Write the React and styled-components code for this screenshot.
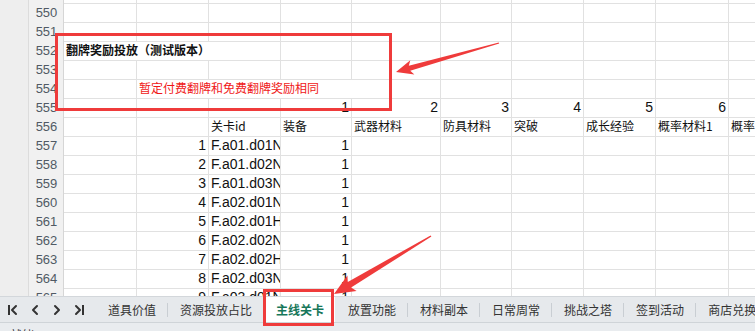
import React from "react";
import styled, { createGlobalStyle } from "styled-components";

const GlobalStyle = createGlobalStyle`
  html, body { margin: 0; padding: 0; background: #fff; overflow: hidden; }
  body { font-family: "Liberation Sans", "Noto Sans CJK SC", sans-serif; }
  * { box-sizing: border-box; }
`;

const RED = "#ef3b3b";
const COLS = "28px 36px 73px 72px 72px 71px 89px 71px 72px 72px 73px 72px";

const Frame = styled.div`
  position: relative;
  width: 755px;
  height: 331px;
  overflow: hidden;
  display: flex;
  flex-direction: column;
`;

const Sheet = styled.div`
  flex: 0 0 296px;
  overflow: hidden;
  background: #fff;
`;

const Rows = styled.div`
  margin-top: -16px;
  width: 801px;
`;

const Row = styled.div`
  display: grid;
  grid-template-columns: ${COLS};
  height: 19px;
`;

const Gutter = styled.div`
  background: #eeeeee;
`;

const RowHead = styled.div`
  background: #f1f1f1;
  border-left: 1px solid #dcdcdc;
  border-right: 1px solid #d6d6d6;
  border-bottom: 1px solid #dcdcdc;
  color: #505a64;
  font-family: "Liberation Sans", sans-serif;
  font-size: 13px;
  line-height: 19px;
  text-align: center;
  padding-left: 1px;
`;

const Cell = styled.div`
  grid-column: span ${(p) => p.$span || 1};
  border-right: 1px solid ${(p) => (p.$span > 1 ? "transparent" : "#e1e1e1")};
  border-bottom: 1px solid #e1e1e1;
  white-space: nowrap;
  overflow: ${(p) => (p.$clip ? "hidden" : "visible")};
  text-align: ${(p) => p.$align || "left"};
  padding: 0 2px 0 2px;
  font-family: ${(p) =>
    p.$cjk
      ? '"Noto Sans CJK SC", sans-serif'
      : '"Liberation Sans", "Noto Sans CJK SC", sans-serif'};
  font-size: ${(p) => (p.$cjk ? "12px" : "14px")};
  line-height: 18px;
  font-weight: ${(p) => (p.$bold ? 700 : 400)};
  color: ${(p) => p.$color || "#111"};
  position: relative;
  z-index: ${(p) => (p.$span > 1 ? 1 : 0)};
`;

const TabBar = styled.div`
  flex: 0 0 26px;
  display: flex;
  align-items: stretch;
  background: #e6e9ec;
  border-top: 1px solid #d3d7db;
`;

const NavGroup = styled.div`
  flex: 0 0 96px;
  display: flex;
  align-items: center;
  padding-left: 2px;
`;

const NavButton = styled.div`
  width: 22px;
  height: 16px;
  display: flex;
  align-items: center;
  justify-content: center;
  color: #333;
`;

const Tab = styled.div`
  flex: 0 0 auto;
  display: flex;
  align-items: center;
  padding: 0 11px 0 12px;
  font-family: "Noto Sans CJK SC", sans-serif;
  font-size: 12px;
  white-space: nowrap;
  color: ${(p) => (p.$active ? "#17775a" : "#333")};
  font-weight: ${(p) => (p.$active ? 700 : 400)};
  background: ${(p) => (p.$active ? "#ffffff" : "transparent")};
`;

const Divider = styled.div`
  flex: 0 0 1px;
  align-self: center;
  height: 14px;
  background: ${(p) => (p.$hidden ? "transparent" : "#c9ced3")};
`;

const StatusBar = styled.div`
  flex: 0 0 22px;
  background: #e9ecef;
  border-top: 1px solid #cfd4d8;
  padding: 3px 0 0 10px;
  font-family: "Noto Sans CJK SC", sans-serif;
  font-size: 12px;
  color: #333;
`;

const Overlay = styled.svg`
  position: absolute;
  left: 0;
  top: 0;
  width: 755px;
  height: 331px;
  pointer-events: none;
  z-index: 5;
`;

const rowsData = [
  { n: 549, cells: [] },
  { n: 550, cells: [] },
  { n: 551, cells: [] },
  {
    n: 552,
    cells: [{ col: 2, span: 2, text: "翻牌奖励投放（测试版本）", cjk: true, bold: true }],
  },
  { n: 553, cells: [] },
  {
    n: 554,
    cells: [
      { col: 3, span: 3, text: "暂定付费翻牌和免费翻牌奖励相同", cjk: true, color: "#f01818" },
    ],
  },
  {
    n: 555,
    cells: [
      { col: 5, text: "1", align: "right" },
      { col: 6, text: "2", align: "right" },
      { col: 7, text: "3", align: "right" },
      { col: 8, text: "4", align: "right" },
      { col: 9, text: "5", align: "right" },
      { col: 10, text: "6", align: "right" },
      { col: 11, text: "7", align: "right" },
    ],
  },
  {
    n: 556,
    cells: [
      { col: 4, text: "关卡id", cjk: true, clip: true },
      { col: 5, text: "装备", cjk: true, clip: true },
      { col: 6, text: "武器材料", cjk: true, clip: true },
      { col: 7, text: "防具材料", cjk: true, clip: true },
      { col: 8, text: "突破", cjk: true, clip: true },
      { col: 9, text: "成长经验", cjk: true, clip: true },
      { col: 10, text: "概率材料1", cjk: true, clip: true },
      { col: 11, text: "概率材料2", cjk: true, clip: true },
    ],
  },
];

const ids = [
  "F.a01.d01N",
  "F.a01.d02N",
  "F.a01.d03N",
  "F.a02.d01N",
  "F.a02.d01H",
  "F.a02.d02N",
  "F.a02.d02H",
  "F.a02.d03N",
  "F.a03.d01N",
];
ids.forEach((id, i) => {
  rowsData.push({
    n: 557 + i,
    cells: [
      { col: 3, text: String(i + 1), align: "right" },
      { col: 4, text: id, clip: true },
      { col: 5, text: "1", align: "right" },
    ],
  });
});

function SheetRow({ data }) {
  const out = [];
  let c = 2;
  while (c <= 11) {
    const cell = data.cells.find((x) => x.col === c);
    if (cell) {
      out.push(
        <Cell
          key={c}
          $span={cell.span || 1}
          $align={cell.align}
          $cjk={cell.cjk}
          $bold={cell.bold}
          $color={cell.color}
          $clip={cell.clip}
        >
          {cell.text}
        </Cell>
      );
      c += cell.span || 1;
    } else {
      out.push(<Cell key={c} />);
      c += 1;
    }
  }
  return (
    <Row>
      <Gutter />
      <RowHead>{data.n}</RowHead>
      {out}
    </Row>
  );
}

const tabs = [
  "道具价值",
  "资源投放占比",
  "主线关卡",
  "放置功能",
  "材料副本",
  "日常周常",
  "挑战之塔",
  "签到活动",
  "商店兑换",
];
const activeIndex = 2;

function NavIcon({ kind }) {
  return (
    <svg width="16" height="16" viewBox="0 0 16 16" fill="none" stroke="currentColor" strokeWidth="2" strokeLinecap="square">
      {kind === "first" && (
        <>
          <line x1="4" y1="4" x2="4" y2="12" />
          <polyline points="11,4 7,8 11,12" strokeLinecap="round" strokeLinejoin="round" />
        </>
      )}
      {kind === "prev" && <polyline points="10,4 6,8 10,12" strokeLinecap="round" strokeLinejoin="round" />}
      {kind === "next" && <polyline points="6,4 10,8 6,12" strokeLinecap="round" strokeLinejoin="round" />}
      {kind === "last" && (
        <>
          <polyline points="5,4 9,8 5,12" strokeLinecap="round" strokeLinejoin="round" />
          <line x1="12" y1="4" x2="12" y2="12" />
        </>
      )}
    </svg>
  );
}

function arrowPoints(tip, tail, headLen, headHalf, shaftHalf, tailHalf) {
  const dx = tail[0] - tip[0];
  const dy = tail[1] - tip[1];
  const len = Math.hypot(dx, dy);
  const u = [dx / len, dy / len];
  const n = [-u[1], u[0]];
  const at = (base, along, side) => [
    base[0] + u[0] * along + n[0] * side,
    base[1] + u[1] * along + n[1] * side,
  ];
  const pts = [
    tip,
    at(tip, headLen, headHalf),
    at(tip, headLen - 3, shaftHalf),
    at(tail, 0, tailHalf),
    at(tail, 0, -tailHalf),
    at(tip, headLen - 3, -shaftHalf),
    at(tip, headLen, -headHalf),
  ];
  return pts.map((p) => `${p[0].toFixed(1)},${p[1].toFixed(1)}`).join(" ");
}

export default function App() {
  return (
    <>
      <GlobalStyle />
      <Frame>
        <Sheet>
          <Rows>
            {rowsData.map((r) => (
              <SheetRow key={r.n} data={r} />
            ))}
          </Rows>
        </Sheet>
        <TabBar>
          <NavGroup>
            <NavButton><NavIcon kind="first" /></NavButton>
            <NavButton><NavIcon kind="prev" /></NavButton>
            <NavButton><NavIcon kind="next" /></NavButton>
            <NavButton><NavIcon kind="last" /></NavButton>
          </NavGroup>
          {tabs.map((t, i) => (
            <React.Fragment key={t}>
              <Tab $active={i === activeIndex}>{t}</Tab>
              <Divider $hidden={i === activeIndex || i + 1 === activeIndex} />
            </React.Fragment>
          ))}
        </TabBar>
        <StatusBar>就绪</StatusBar>
        <Overlay viewBox="0 0 755 331">
          <rect x="56.5" y="34.5" width="334" height="75" fill="none" stroke={RED} strokeWidth="3" />
          <rect x="264.5" y="290.5" width="68" height="34" fill="none" stroke={RED} strokeWidth="3" />
          <polygon points={arrowPoints([396, 72], [499, 43], 17, 7.5, 2.6, 0.6)} fill={RED} />
          <polygon points={arrowPoints([334, 294], [431, 236], 21, 9, 3.2, 0.7)} fill={RED} />
        </Overlay>
      </Frame>
    </>
  );
}
